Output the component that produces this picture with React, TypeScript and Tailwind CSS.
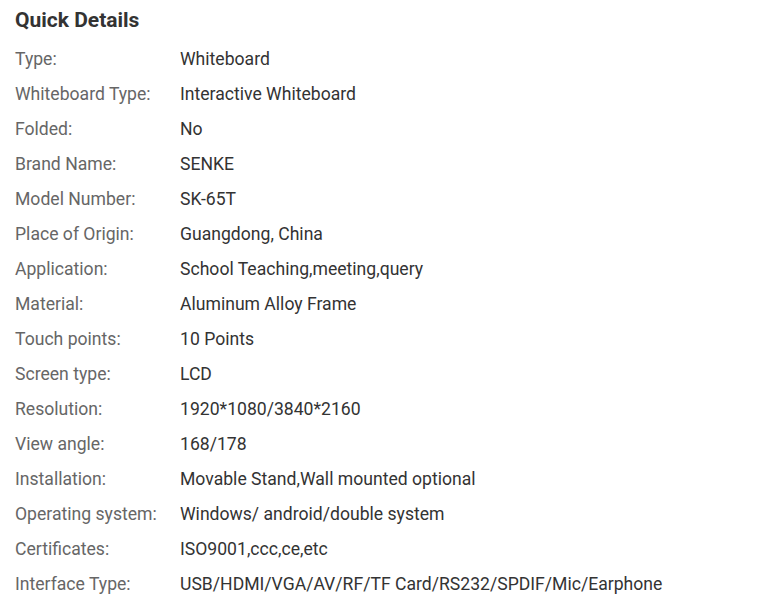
import React from "react";

const rows: [string, string][] = [
  ["Type:", "Whiteboard"],
  ["Whiteboard Type:", "Interactive Whiteboard"],
  ["Folded:", "No"],
  ["Brand Name:", "SENKE"],
  ["Model Number:", "SK-65T"],
  ["Place of Origin:", "Guangdong, China"],
  ["Application:", "School Teaching,meeting,query"],
  ["Material:", "Aluminum Alloy Frame"],
  ["Touch points:", "10 Points"],
  ["Screen type:", "LCD"],
  ["Resolution:", "1920*1080/3840*2160"],
  ["View angle:", "168/178"],
  ["Installation:", "Movable Stand,Wall mounted optional"],
  ["Operating system:", "Windows/ android/double system"],
  ["Certificates:", "ISO9001,ccc,ce,etc"],
  ["Interface Type:", "USB/HDMI/VGA/AV/RF/TF Card/RS232/SPDIF/Mic/Earphone"],
];

export default function App() {
  return (
    <div className="w-[768px] h-[612px] bg-white px-[15px] pt-[6px]" style={{ fontFamily: "Roboto, sans-serif" }}>
      <h2 className="text-[21px] font-bold text-[#333] leading-[28px] mb-[7px]">Quick Details</h2>
      <div className="flex flex-col">
        {rows.map(([k, v]) => (
          <div key={k} className="flex h-[35px] items-center text-[17.6px] leading-[22px]">
            <div className="w-[165px] text-[#666]">{k}</div>
            <div className="text-[#333]">{v}</div>
          </div>
        ))}
      </div>
    </div>
  );
}
